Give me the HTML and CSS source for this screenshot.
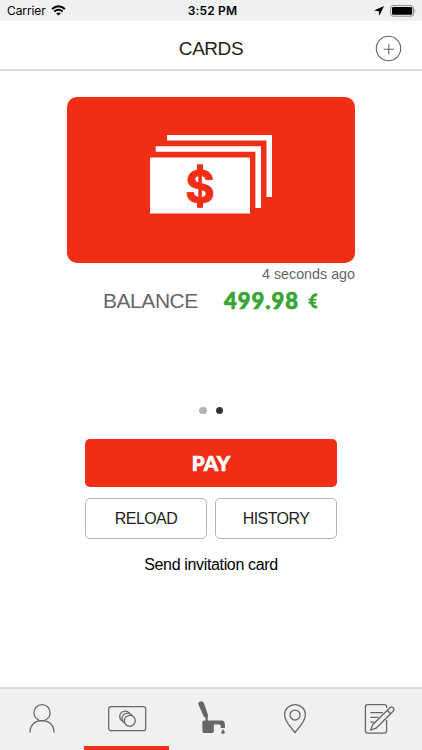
FILE: index.html
```html
<!DOCTYPE html>
<html lang="en">
<head>
<meta charset="utf-8">
<title>Cards</title>
<link rel="stylesheet" href="styles.css">
</head>
<body>
<div class="status">
  <div class="carrier"><span>Carrier</span>
    <svg width="15" height="11" viewBox="0 0 15 11"><g fill="none" stroke="#000" stroke-width="2"><path d="M1 4Q7.500 -1.600 14 4"/><path d="M3.300 6.500Q7.500 3 11.700 6.500"/></g><path d="M5.200 8.300Q7.500 6.600 9.800 8.300L7.500 10.600Z"/></svg>
  </div>
  <div class="clock">3:52 PM</div>
  <div class="indicators">
    <svg width="10" height="10" viewBox="0 0 10 10"><path d="M10 0L5.300 9.800L4.800 5.200L0 4.600Z"/></svg>
    <svg width="27" height="12" viewBox="0 0 27 12"><rect x=".6" y=".6" width="23" height="10.600" rx="2.600" fill="none" stroke="#888" stroke-width="1"/><rect x="2" y="2" width="20.200" height="7.800" rx="1.300"/><path d="M24.800 4.200Q26.400 6 24.800 7.800Z" fill="#888"/></svg>
  </div>
</div>
<header class="header">
  <h1>CARDS</h1>
  <svg class="add" width="26" height="26" viewBox="0 0 26 26" fill="none" stroke="#666" stroke-width="1.100"><circle cx="12.500" cy="12.500" r="12.200"/><path d="M7.700 13.300H18M12.800 8.200V18.400"/></svg>
</header>
<main class="main">
  <div class="card">
    <svg width="122" height="79" viewBox="0 0 122 79"><path fill="none" stroke="#fff" stroke-width="5.600" d="M17 2.800H119.300V62M5.700 14H108.200V73"/><path fill="#fff" d="M0 22.500H100V78.500H0Z"/><text class="dollar" x="50" y="67.800" text-anchor="middle">$</text><path fill="#f02d15" d="M47 29.300H53V36H47ZM47 66H53V72.800H47Z"/></svg>
  </div>
  <div class="updated">4 seconds ago</div>
  <div class="balance"><span class="label">BALANCE</span><span class="amount">499.98</span><svg class="euro" width="10" height="16" viewBox="0 0 10 16" fill="none" stroke="#3aa535" stroke-width="3"><path d="M9.200 2.200C5.500 .8 3.600 4.200 3.600 7.900C3.600 11.900 5.500 14.900 9.200 13.700"/><path stroke-width="1.900" d="M.5 6.600H8.500M.5 9.700H8"/></svg></div>
  <div class="dots"><i></i><i class="active"></i></div>
  <div class="actions">
    <button class="pay">PAY</button>
    <button class="reload">RELOAD</button>
    <button class="history">HISTORY</button>
  </div>
  <div class="invite">Send invitation card</div>
</main>
<nav class="tabs">
  <div class="tab"><svg width="40" height="40" viewBox="0 0 40 40"><circle cx="20" cy="12.700" r="8.100"/><path d="M8 32.500C8 25 13 20.700 20 20.700S32 25 32 32.500"/></svg></div>
  <div class="tab selected"><svg width="40" height="40" viewBox="0 0 40 40"><rect x="1.700" y="6.700" width="37" height="24" rx="2.500"/><g class="coins"><circle cx="18.200" cy="16.500" r="5.500"/><circle cx="20.500" cy="18.500" r="5.500"/><circle cx="22.800" cy="20.800" r="5.500"/></g></svg></div>
  <div class="tab"><svg width="40" height="40" viewBox="0 0 40 40"><g class="solid"><path d="M7.400 4.600C6.500 .8 11.600 -.2 13 3.300L17.200 15.500L16.700 17V20.500H30C33.500 20.500 33.900 22.500 33.900 25V28H29.700V26.300Q29.700 24.500 28.500 24.500H22.800V31.300Q22.800 33 21.200 33H13Q11.400 33 11.400 31.300V22.100Q11.400 20.500 13 20.500H14.500V17.800L12.700 16.500Z"/><path d="M32 28.900Q30.300 31.400 30.300 32.300A1.700 1.700 0 0 0 33.700 32.300Q33.700 31.400 32 28.900Z"/></g></svg></div>
  <div class="tab"><svg width="40" height="40" viewBox="0 0 40 40"><path d="M20 32.700C17 28 9.600 22.500 9.600 14.500A10.400 9.900 0 0 1 30.400 14.500C30.400 22.500 23 28 20 32.700Z"/><circle cx="20" cy="15" r="5"/></svg></div>
  <div class="tab"><svg width="40" height="40" viewBox="0 0 40 40"><path d="M26.600 8V6.700Q26.600 4.600 24.500 4.600H7.800Q5.400 4.600 5.400 7V31Q5.400 33.100 7.800 33.100H24.300Q26.600 33.100 26.600 31V20"/><path d="M10.300 12.500H23M10.300 17.300H18.500M10.300 22H14"/><path class="pencil" d="M10.600 30.200L12.700 24.800L29.800 7.700Q31.600 6.300 33.200 7.800T33.100 11.300L16.100 28.200ZM27.200 10.300L30.600 13.800"/></svg></div>
</nav>
</body>
</html>
```
FILE: styles.css
```css
* { box-sizing: border-box; }
body {
  margin: 0;
  width: 422px;
  height: 750px;
  display: flex;
  flex-direction: column;
  overflow: hidden;
  background: #fff;
  font-family: "Liberation Sans", sans-serif;
}
svg { display: block; flex: none; }
.status {
  height: 21px;
  padding: 0 5px 0 7px;
  display: grid;
  grid-template-columns: 1fr auto 1fr;
  align-items: center;
  background: #f0f0f0;
  font: 12px/21px Inter, sans-serif;
}
.carrier, .indicators { display: flex; align-items: center; }
.carrier { gap: 5px; letter-spacing: -.1px; }
.clock { font-weight: 600; letter-spacing: .15px; padding-left: 1px; }
.indicators { justify-content: flex-end; gap: 6px; }
.header {
  height: 50px;
  padding: 7px 20px 0;
  border-bottom: 2px solid #dcdcdc;
  display: grid;
  grid-template-columns: 26px 1fr 26px;
  align-items: center;
}
h1 {
  grid-column: 2;
  margin: 0;
  text-align: center;
  font-size: 19px;
  letter-spacing: -.45px;
  font-weight: 400;
  color: #231f20;
}
.add { overflow: visible; }
.main { flex: 1; display: flex; flex-direction: column; align-items: center; }
.card {
  width: 288px;
  height: 166px;
  margin-top: 26px;
  padding: 38px 0 0 83px;
  border-radius: 10px;
  background: #f02d15;
}
.dollar { font: 700 45px Inter, sans-serif; fill: #f02d15; stroke: #f02d15; stroke-width: .8px; }
.updated {
  width: 288px;
  height: 22px;
  text-align: right;
  font-size: 14.300px;
  line-height: 22px;
  color: #666;
}
.balance { width: 216px; height: 31px; display: flex; align-items: center; white-space: nowrap; }
.label { width: 121px; font-size: 21px; line-height: 31px; letter-spacing: -.45px; color: #666; }
.amount { width: 84px; font: 900 22px/31px Lato, sans-serif; letter-spacing: 1px; -webkit-text-stroke: .7px #3aa535; color: #3aa535; }
.dots { height: 7px; margin-top: 90.500px; display: flex; gap: 9px; }
.dots i { width: 7.500px; height: 7.500px; border-radius: 50%; background: #b5b5b5; }
.dots .active { background: #353538; }
.actions {
  width: 252px;
  margin-top: 25.500px;
  display: grid;
  grid-template-columns: 1fr 1fr;
  grid-template-rows: 48px 41px;
  gap: 11px 8px;
}
button {
  padding: 0;
  border: 1px solid #b4b4b4;
  border-radius: 5px;
  background: #fff;
  font: 16px "Liberation Sans", sans-serif;
  letter-spacing: -.55px;
  color: #231f20;
}
.pay {
  grid-column: 1 / 3;
  padding-bottom: 1px;
  border: 0;
  background: #f02d15;
  color: #fff;
  font: 900 20.500px Lato, sans-serif;
  letter-spacing: .2px;
  -webkit-text-stroke: .7px #fff;
}
.invite { margin-top: 16px; font-size: 16px; line-height: 20px; letter-spacing: -.35px; color: #000; }
.tabs {
  height: 63px;
  display: grid;
  grid-template-columns: repeat(5, 1fr);
  border-top: 2px solid #dcdcdc;
  background: #f0f0f0;
}
.tab { display: flex; justify-content: center; padding-top: 11px; border-bottom: 4px solid transparent; }
.selected { border-bottom-color: #f02d15; }
.tab svg { fill: none; stroke: #666; stroke-width: 1.250; }
.tab .coins { fill: #f0f0f0; }
.tab .solid { fill: #666; stroke: none; }
.tab .pencil { fill: #f0f0f0; stroke-linejoin: round; }
```
